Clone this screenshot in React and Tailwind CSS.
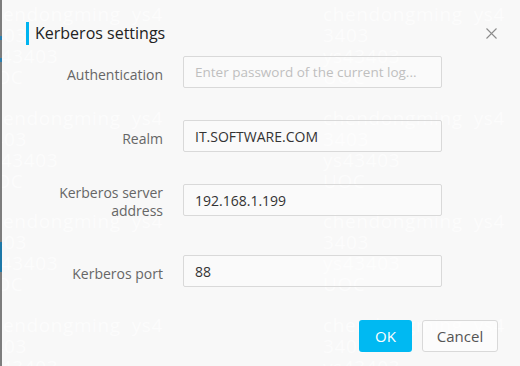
import React from 'react';

const fields = [
  { label: 'Authentication', value: '', placeholder: 'Enter password of the current log...', labelCls: 'pt-[6px]', rowCls: 'mb-[32px]' },
  { label: 'Realm', value: 'IT.SOFTWARE.COM', labelCls: 'pt-[6px]', rowCls: 'mb-[32px]' },
  { label: 'Kerberos server address', value: '192.168.1.199', labelCls: 'pt-0', rowCls: 'mb-[35px]' },
  { label: 'Kerberos port', value: '88', labelCls: 'pt-[6px]', rowCls: 'mb-0' },
];

const markLines = ['chendongming  ys4', '3403', 'ys43403', 'UOC'];

// faint user watermark, painted behind the dialog content
function Watermark() {
  const blocks = [0, 1, 2, 3];
  return (
    <div className="pointer-events-none absolute inset-0 z-0 overflow-hidden flex text-white text-[19px] tracking-[0.6px] leading-[21px] opacity-60 select-none">
      {[0, 1].map((col) => (
        <div key={col} className={col === 0 ? 'flex flex-col ml-[-21px] w-[342px] shrink-0 pt-[4px]' : 'flex flex-col w-[200px] shrink-0 pt-[4px]'}>
          {blocks.map((b) => (
            <div key={b} className="h-[103.5px] shrink-0">
              {markLines.map((t) => (
                <div key={t} className="whitespace-pre">{t}</div>
              ))}
            </div>
          ))}
        </div>
      ))}
    </div>
  );
}

function Field({ field }) {
  return (
    <div className={`flex items-start ${field.rowCls}`}>
      <div className={`w-[137px] min-h-[32px] flex items-center justify-end text-right text-[14px] leading-[18px] text-[#666] ${field.labelCls}`}>
        <span className="block max-w-[110px]">{field.label}</span>
      </div>
      <div className="ml-[20px] w-[259px] h-[32px] border border-[#d9d9d9] rounded-[2px] bg-white/30 flex items-center px-[11px] text-[14px] whitespace-nowrap overflow-hidden">
        {field.value ? (
          <span className="text-[#333]">{field.value}</span>
        ) : (
          <span className="text-[#bfbfbf] text-[13.5px]">{field.placeholder}</span>
        )}
      </div>
    </div>
  );
}

function App() {
  return (
    <div className="w-[520px] h-[366px] flex bg-[#7d7d7d] overflow-hidden" style={{ fontFamily: '"Open Sans", "Noto Sans", sans-serif' }}>
      <div className="w-[2px] shrink-0 flex flex-col">
        <div className="h-[36px]" />
        <div className="h-[4px] bg-[#2a7fb0]" />
        <div className="h-[18px]" />
        <div className="h-[4px] bg-[#2a7fb0]" />
        <div className="h-[180px]" />
        <div className="h-[30px] bg-[#1d78a8]" />
      </div>
      <div className="relative flex-1 bg-[#f8f8f8]">
        <Watermark />
        <div className="relative z-10 flex flex-col pl-[24px] pr-[22px]">
          <div className="flex items-center pt-[22px]">
            <div className="w-[3px] h-[23px] bg-[#00b4f0]" />
            <div className="ml-[6px] text-[16px] text-[#222] leading-[23px]">Kerberos settings</div>
            <div className="ml-auto mr-[1px] w-[11px] h-[11px] flex items-center justify-center">
              <svg width="11" height="11" viewBox="0 0 11 11" fill="none" stroke="#8c8c8c" strokeWidth="1.1">
                <path d="M0.5 0.5 L10.5 10.5 M10.5 0.5 L0.5 10.5" />
              </svg>
            </div>
          </div>
          <div className="mt-[11px] flex flex-col">
            {fields.map((f) => (
              <Field key={f.label} field={f} />
            ))}
          </div>
          <div className="mt-[33px] flex justify-end gap-[10px]">
            <button className="w-[53px] h-[32px] rounded-[3px] bg-[#00b9f2] text-white text-[15px]">OK</button>
            <button className="w-[76px] h-[32px] rounded-[3px] border border-[#d9d9d9] bg-white/50 text-[#555] text-[15px]">Cancel</button>
          </div>
        </div>
      </div>
    </div>
  );
}

export default App;
